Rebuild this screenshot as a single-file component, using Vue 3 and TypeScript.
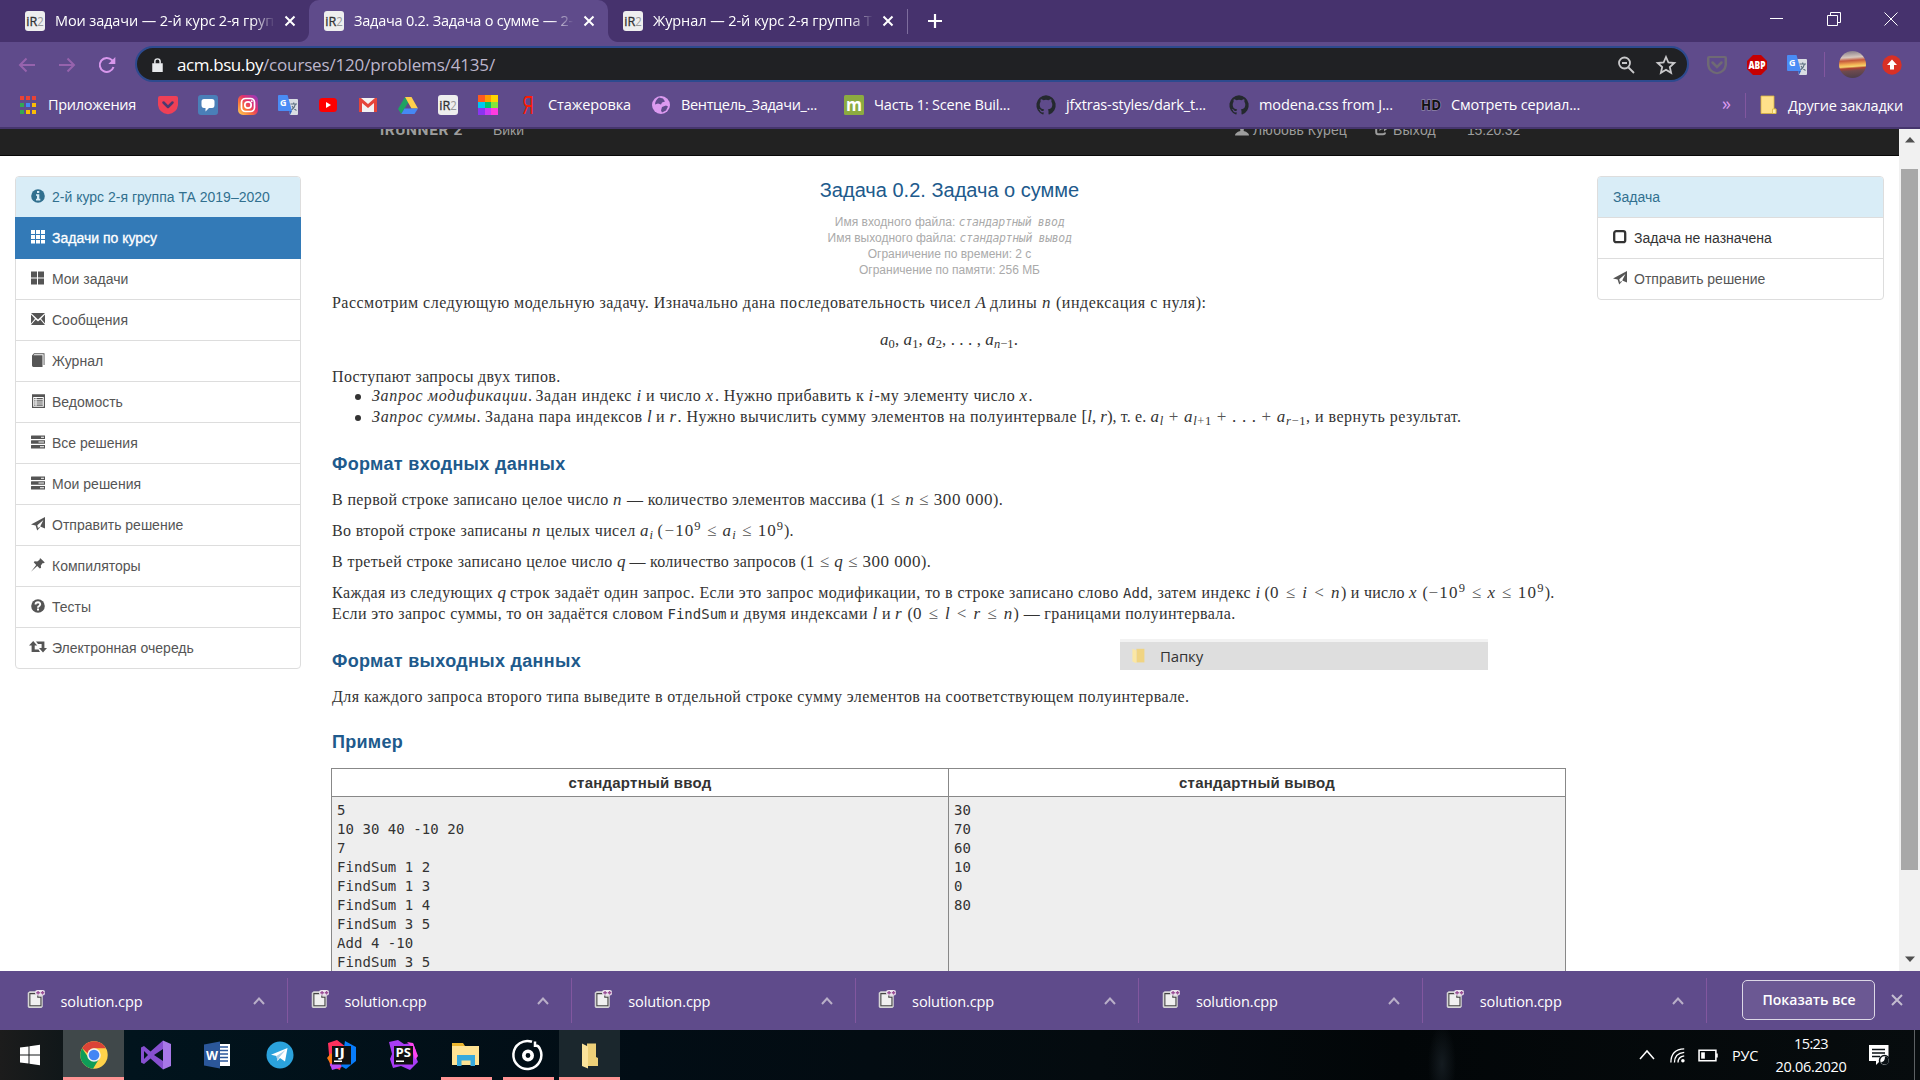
<script setup lang="ts">
type Token = { k: 't' | 'm' | 'c' | 'e'; s: string; w: number }
type Line = { gap: number; kind?: 'center' | 'bullet' | 'head'; tokens: Token[] }
type Part = { s: string; c: string }

// Spreads the letters of a run so that it occupies the given width.
const vFit = {
  mounted(el: HTMLElement, binding: { value: number }) {
    const n = (el.textContent || '').length
    if (!n || !binding.value) return
    const natural = el.getBoundingClientRect().width
    el.style.letterSpacing = ((binding.value - natural) / n).toFixed(4) + 'px'
  },
}

// Builds a row of tokens from start offsets: the last number closes the row.
function row(gap: number, items: (string | number)[], kind?: Line['kind']): Line {
  const tokens: Token[] = []
  for (let i = 0; i + 2 < items.length; i += 2) {
    const raw = items[i + 1] as string
    tokens.push({
      k: raw[0] as Token['k'],
      s: raw.slice(2),
      w: (items[i + 2] as number) - (items[i] as number),
    })
  }
  return { gap, kind, tokens }
}

// Splits a formula: _{..} is a subscript, ^{..} a superscript, Latin letters are italic.
function math(src: string): Part[] {
  const out: Part[] = []
  const letters = (s: string, base: string) => {
    for (const m of s.match(/[A-Za-z]+|[≤<+−]+|[^A-Za-z≤<+−]+/g) || []) {
      const extra = /[A-Za-z]/.test(m) ? ' it' : /[≤<+−]/.test(m) ? ' op' : ''
      out.push({ s: m, c: base + extra })
    }
  }
  for (const piece of src.match(/[_^]\{[^}]*\}|[^_^]+/g) || []) {
    if (piece[0] === '_') letters(piece.slice(2, -1), 'sub')
    else if (piece[0] === '^') letters(piece.slice(2, -1), 'sup')
    else letters(piece, '')
  }
  return out
}

const lines: Line[] = [
  row(15, [331.5, 't:Рассмотрим следующую модельную задачу. Изначально дана последовательность чисел ', 975, 'm:A', 989.5, 't:длины ', 1041.5, 'm:n', 1055.5, 't:(индексация с нуля):', 1206]),
  row(18, [880, 'm:a_{0}, a_{1}, a_{2}, . . . , a_{n−1}.', 1018], 'center'),
  row(16, [331.5, 't:Поступают запросы двух типов.', 560]),
  row(-1, [371.5, 'e:Запрос модификации', 527.5, 't:. ', 535, 't:Задан индекс ', 636, 'm:i', 645.5, 't:и число ', 705, 'm:x', 714.5, 't:. Нужно прибавить к ', 868, 'm:i', 874, 't:-му элементу число ', 1019, 'm:x', 1028, 't:.', 1032], 'bullet'),
  row(1, [371.5, 'e:Запрос суммы', 476, 't:. ', 484.5, 't:Задана пара индексов ', 646.5, 'm:l', 655.5, 't:и ', 669, 'm:r', 677, 't:. Нужно вычислить сумму элементов на полуинтервале ', 1081, 'm:[l, r)', 1112, 't:, т. е. ', 1150, 'm:a_{l} + a_{l+1} + . . . + a_{r−1}', 1305.5, 't:, и вернуть результат.', 1461], 'bullet'),
  row(27, [331.5, 't:Формат входных данных', 565], 'head'),
  row(16, [331.5, 't:В первой строке записано целое число ', 612.5, 'm:n', 626.5, 't:— количество элементов массива (', 876, 'm:1 ≤ n ≤ 300 000', 992.5, 't:).', 1002.5]),
  row(11, [331.5, 't:Во второй строке записаны ', 531.5, 'm:n', 545.5, 't:целых чисел ', 639.5, 'm:a_{i}', 653.5, 't: ', 657, 't:(', 664, 'm:−10^{9} ≤ a_{i} ≤ 10^{9}', 783.5, 't:).', 793]),
  row(11, [331.5, 't:В третьей строке записано целое число ', 616.5, 'm:q', 629, 't:— количество запросов (', 805.5, 'm:1 ≤ q ≤ 300 000', 920.5, 't:).', 930.5]),
  row(11, [331.5, 't:Каждая из следующих ', 497, 'm:q', 509.5, 't:строк задаёт один запрос. Если это запрос модификации, то в строке записано слово ', 1122.5, 'c:Add', 1148, 't:, затем индекс ', 1255, 'm:i', 1264, 't:(', 1269.5, 'm:0 ≤ i < n', 1340.5, 't:) и число ', 1408.5, 'm:x', 1422, 't:(', 1428, 'm:−10^{9} ≤ x ≤ 10^{9}', 1544, 't:).', 1554]),
  row(1, [331.5, 't:Если это запрос суммы, то он задаётся словом ', 667, 'c:FindSum', 726, 't: ', 729.5, 't:и двумя индексами ', 872, 'm:l', 881.5, 't:и ', 894.5, 'm:r', 907, 't:(', 912.5, 'm:0 ≤ l < r ≤ n', 1013, 't:) — границами полуинтервала.', 1235]),
  row(27, [331.5, 't:Формат выходных данных', 580.5], 'head'),
  row(16, [331.5, 't:Для каждого запроса второго типа выведите в отдельной строке сумму элементов на соответствующем полуинтервале.', 1189]),
  row(25, [331.5, 't:Пример', 402.5], 'head'),
]

const meta = [
  { a: 'Имя входного файла: ', aw: 124, b: 'стандартный ввод', bw: 105.5 },
  { a: 'Имя выходного файла: ', aw: 132, b: 'стандартный вывод', bw: 112 },
  { a: 'Ограничение по времени: 2 с', aw: 163.5, b: '', bw: 0 },
  { a: 'Ограничение по памяти: 256 МБ', aw: 181, b: '', bw: 0 },
]

const input = '5\n10 30 40 -10 20\n7\nFindSum 1 2\nFindSum 1 3\nFindSum 1 4\nFindSum 3 5\nAdd 4 -10\nFindSum 3 5\n'
const output = '30\n70\n60\n10\n0\n80'

const tabs = [
  { title: 'Мои задачи — 2-й курс 2-я груп', w: 219, cls: 'first' },
  { title: 'Задача 0.2. Задача о сумме — 2-', w: 219, cls: 'active' },
  { title: 'Журнал — 2-й курс 2-я группа Т', w: 219, cls: '' },
]

const bookmarks = [
  { icon: 'apps', t: 'Приложения', tw: 88, w: 140 },
  { icon: 'pocket', t: '', tw: 0, w: 40 },
  { icon: 'chat', t: '', tw: 0, w: 40 },
  { icon: 'insta', t: '', tw: 0, w: 40 },
  { icon: 'translate', t: '', tw: 0, w: 40 },
  { icon: 'youtube', t: '', tw: 0, w: 40 },
  { icon: 'gmail', t: '', tw: 0, w: 40 },
  { icon: 'drive', t: '', tw: 0, w: 40 },
  { icon: 'ir2', t: '', tw: 0, w: 40 },
  { icon: 'rainbow', t: '', tw: 0, w: 40 },
  { icon: 'ya', t: 'Стажеровка', tw: 83, w: 133 },
  { icon: 'globe', t: 'Вентцель_Задачи_...', tw: 136, w: 193 },
  { icon: 'm', t: 'Часть 1: Scene Buil...', tw: 136, w: 192 },
  { icon: 'github', t: 'jfxtras-styles/dark_t...', tw: 140, w: 193 },
  { icon: 'github', t: 'modena.css from J...', tw: 134, w: 192 },
  { icon: 'hd', t: 'Смотреть сериал...', tw: 129, w: 301 },
]

const menu = [
  { icon: 'info', t: '2-й курс 2-я группа ТА 2019–2020', cls: 'info' },
  { icon: 'th', t: 'Задачи по курсу', cls: 'active' },
  { icon: 'thlarge', t: 'Мои задачи', cls: '' },
  { icon: 'envelope', t: 'Сообщения', cls: '' },
  { icon: 'book', t: 'Журнал', cls: '' },
  { icon: 'listalt', t: 'Ведомость', cls: '' },
  { icon: 'tasks', t: 'Все решения', cls: '' },
  { icon: 'tasks', t: 'Мои решения', cls: '' },
  { icon: 'send', t: 'Отправить решение', cls: '' },
  { icon: 'pin', t: 'Компиляторы', cls: '' },
  { icon: 'question', t: 'Тесты', cls: '' },
  { icon: 'retweet', t: 'Электронная очередь', cls: '' },
]

const taskbar = [
  { icon: 'windows', cls: 'start' },
  { icon: 'chrome', cls: 'open current' },
  { icon: 'vs', cls: '' },
  { icon: 'word', cls: '' },
  { icon: 'telegram', cls: '' },
  { icon: 'idea', cls: '' },
  { icon: 'phpstorm', cls: '' },
  { icon: 'explorer', cls: 'open' },
  { icon: 'groove', cls: 'open' },
  { icon: 'folder', cls: 'open lit' },
]

const cyr = 'font-family="Open Sans, sans-serif"'
// Small 14-unit glyphs of the side menus.
const glyphs: Record<string, string> = {
  info: '<circle cx="7" cy="7" r="6.8"/><path fill="#d9edf7" d="M6 2h2.3v2H6zM5 5.2h3.3v4.6h1v1.6H5V9.8h1V6.8H5z"/>',
  th: '<path d="M0 0h4v4H0zM5 0h4v4H5zM10 0h4v4h-4zM0 5h4v4H0zM5 5h4v4H5zM10 5h4v4h-4zM0 10h4v3.4H0zM5 10h4v3.4H5zM10 10h4v3.4h-4z"/>',
  thlarge: '<path d="M0 .5h6v6H0zM7 .5h6v6H7zM0 7.5h6v6H0zM7 7.5h6v6H7z"/>',
  envelope: '<path d="M0 1h14L7 7.500zM0 2.500l4 4.200-4 4.800zM14 2.500l-4 4.200 4 4.800zM4.700 7.500L7 9.600l2.300-2.100L14 13H0z"/>',
  book: '<path d="M1 2.500L3 .3h10.500V12h-.9V1.300H3.300L2.300 2.300H11.500V14H2.400Q1 14 1 12.600z"/>',
  listalt: '<path fill-rule="evenodd" d="M1 .3h13V14H1zM2.200 3v9.800h10.600V3z"/><path d="M3.200 4h1.300v1.200H3.200zM5.500 4h6.300v1.200H5.500zM3.200 6.200h1.300v1.200H3.200zM5.500 6.200h6.300v1.200H5.500zM3.200 8.400h1.300v1.200H3.200zM5.500 8.400h6.300v1.200H5.500zM3.200 10.600h1.300v1.200H3.200zM5.500 10.600h6.300v1.200H5.500z"/>',
  tasks: '<path fill-rule="evenodd" d="M.5.5H14v3.600H.5Q0 4.100 0 3.600V1Q0 .5.500.5zM10 1.700v1h3v-1zM.5 5.200H14v3.600H.5Q0 8.800 0 8.300V5.700Q0 5.200.500 5.200zM7.500 6.400v1H13v-1zM.5 9.900H14v3.600H.5Q0 13.500 0 13v-2.600Q0 9.900.500 9.900zM9 11.200v1h4v-1z"/>',
  send: '<path d="M14 0v11.600l-4.800-2.200L12.400 3 6.300 8.200 7 11.500 8 10l1 .6L6.200 13.500 4.600 8.500 0 7.500z"/>',
  pin: '<path d="M9.400.3l4.400 4.200-1.300.8-.7-.2-2 2.300.3 2.400-1.300.8-2.600-2.700L0 13.800l5.200-6.900L2.700 4.300l1-1 2.500.3 2.500-1.900-.2-.6z"/>',
  question: '<circle cx="7" cy="7" r="6.800"/><path fill="none" stroke="#fff" stroke-width="1.900" d="M4.500 5.500Q4.600 3.300 7 3.300 9.300 3.400 9.200 5.300 9 6.600 7.700 7.300 7 7.600 7 8.700"/><path fill="#fff" d="M6 9.600h2v2H6z"/>',
  retweet: '<path d="M2.200 1L-2 5.500h2.600V12H9L7.500 9.500H3.700v-4h2.500zM5 1.500L7 4h3.600v4H8l4 4.500L16 8h-2.600V1.500z"/>',
  square: '<rect x="1.200" y="1.200" width="11" height="11" rx="2" fill="none" stroke="currentColor" stroke-width="2.300"/>',
  user: '<path d="M7 0Q10 0 10 3.500 9.800 6.500 8.700 7.500V9Q14 10.500 14 13.500H0Q0 10.500 5.300 9V7.500Q4 6 4 3.500 4 0 7 0z"/>',
  logout: '<path d="M6 2H3Q1.200 2 1.200 4v6Q1.200 12.300 3 12.300h5Q10 12.300 10 10.500" fill="none" stroke="currentColor" stroke-width="2"/><path d="M9 1l5.500 4.200L9 9.500V7Q5.500 7 4.500 9 4.300 4 9 3.500z"/>',
}

// Coloured icons on a 20-unit canvas.
const pics: Record<string, string> = {
  apps: '<path fill="#ea4335" d="M2 1h4v4H2zM8 1h4v4H8zM14 1h4v4h-4z"/><path fill="#34a853" d="M2 8h4v4H2z"/><path fill="#4285f4" d="M8 8h4v4H8z"/><path fill="#fbbc05" d="M14 8h4v4h-4z"/><path fill="#34a853" d="M2 15h4v4H2z"/><path fill="#fbbc05" d="M8 15h4v4H8zM14 15h4v4h-4z"/>',
  pocket: '<path fill="#ef4056" d="M2 1h16q2 0 2 2v7Q19 18 10 19.300 1 18 0 10V3q0-2 2-2z"/><path fill="none" stroke="#4c3a70" stroke-width="2.500" stroke-linecap="round" stroke-linejoin="round" d="M5.500 7.500L10 12l4.500-4.500"/>',
  pocketg: '<path fill="#6f6a74" d="M2 1h16q2 0 2 2v7Q19 18 10 19.300 1 18 0 10V3q0-2 2-2z"/><path fill="#5f4b8b" d="M2.500 3h15v7q-1 6-7.500 7.200Q3.500 16 2.500 10z"/><path fill="none" stroke="#6f6a74" stroke-width="2.500" stroke-linecap="round" d="M5.500 7.500L10 12l4.500-4.500"/>',
  chat: '<rect width="20" height="20" rx="3" fill="#4a7fb8"/><path fill="#fff" d="M6 4h8q2.500 0 2.500 2.500v3.500q0 3-2.500 3h-3l-3.500 3.500V13H6q-2.500 0-2.500-3V6.500Q3.500 4 6 4z"/>',
  insta: '<defs><linearGradient id="ig" x1="0" y1="1" x2="1" y2="0"><stop offset="0" stop-color="#ffd85a"/><stop offset=".35" stop-color="#f9713a"/><stop offset=".6" stop-color="#e0306f"/><stop offset="1" stop-color="#8a3bc8"/></linearGradient></defs><rect width="20" height="20" rx="5" fill="url(#ig)"/><rect x="3.500" y="3.500" width="13" height="13" rx="4" fill="none" stroke="#fff" stroke-width="1.700"/><circle cx="10" cy="10" r="3.200" fill="none" stroke="#fff" stroke-width="1.700"/><circle cx="13.800" cy="6.200" r=".9" fill="#fff"/>',
  translate: `<path fill="#d9dde3" d="M8 4h11q1 0 1 1v14q0 1-1 1h-7z"/><path fill="#4a8cf5" d="M1 0h8.500l4.500 16H1q-1 0-1-1V1q0-1 1-1z"/><path fill="#3060c0" d="M11 16h3l-2 4z"/><text x="2" y="11" font-size="9" font-weight="700" fill="#fff" ${cyr}>G</text><path fill="none" stroke="#5c6f80" stroke-width="1.100" d="M12.500 9h6.500M15.700 7.500V9M17.500 9q-1 4-4 6M14 11q2 3.500 4.500 4.500"/>`,
  youtube: '<rect x="1" y="3" width="18" height="14" rx="3.500" fill="#f00"/><path fill="#fff" d="M8 7l5 3-5 3z"/>',
  gmail: '<path fill="#f2f2f2" d="M1 3h18v14H1z"/><path fill="#e5453a" d="M1 3h2l7 6 7-6h2v14h-3V8l-6 5-6-5v9H1z"/>',
  drive: '<path fill="#1ea362" d="M7 2L0 14l3.300 5L10.500 7z"/><path fill="#ffd04b" d="M7 2h6.500l6.500 11.500h-6.500z"/><path fill="#4688f4" d="M6.500 13.500H20L16.500 19H3.300z"/>',
  ir2: `<rect width="20" height="20" rx="3" fill="#eee"/><text x="1.200" y="15" font-size="13" fill="#333" stroke="#333" stroke-width=".3" textLength="11" lengthAdjust="spacingAndGlyphs" ${cyr}>iR</text><text x="12.200" y="15" font-size="13" fill="#999" textLength="6.500" lengthAdjust="spacingAndGlyphs" ${cyr}>2</text>`,
  rainbow: '<path fill="#ff5a1f" d="M0 0h7v7H0z"/><path fill="#ff9c00" d="M7 0h6v7H7z"/><path fill="#ffd500" d="M13 0h7v7h-7z"/><path fill="#00c8f0" d="M0 7h7v6H0z"/><path fill="#00c46c" d="M7 7h6v6H7z"/><path fill="#84e63c" d="M13 7h7v6h-7z"/><path fill="#8a35f0" d="M0 13h7v7H0z"/><path fill="#c93cf5" d="M7 13h6v7H7z"/><path fill="#ff3ce0" d="M13 13h7v7h-7z"/>',
  ya: '<text x="4.500" y="18.500" font-size="25" fill="#ff1a00" textLength="11" lengthAdjust="spacingAndGlyphs" font-family="Liberation Sans, sans-serif">Я</text>',
  globe: '<circle cx="10" cy="10" r="9" fill="#dc9af0"/><path fill="#5f4b8b" d="M8 2.500l4 1 2 3-3 1-1 2-3-1-3 1q0-4 4-7zM11 12l4-1.500 2 1-2 4-4 2-1-2z"/>',
  m: `<rect width="20" height="20" rx="1.500" fill="#8cab40"/><text x="2" y="15.500" font-size="18" font-weight="700" fill="#fff" textLength="16" lengthAdjust="spacingAndGlyphs" ${cyr}>m</text>`,
  github: '<path fill="#24292e" d="M10 .3a9.900 9.900 0 0 0-3.100 19.200c.5.100.7-.2.700-.5v-1.700c-2.800.6-3.400-1.300-3.400-1.300-.4-1.200-1.100-1.500-1.100-1.500-.9-.6.1-.6.100-.6 1 .1 1.500 1 1.500 1 .9 1.500 2.300 1.100 2.900.8.1-.6.4-1.100.6-1.300-2.200-.3-4.500-1.100-4.500-4.900 0-1.100.4-2 1-2.700-.1-.2-.4-1.200.1-2.600 0 0 .8-.3 2.700 1a9.400 9.400 0 0 1 5 0c1.900-1.300 2.700-1 2.700-1 .5 1.400.2 2.400.1 2.600.6.7 1 1.600 1 2.700 0 3.800-2.300 4.600-4.500 4.900.4.300.7.900.7 1.800V19c0 .3.200.6.700.5A9.900 9.900 0 0 0 10 .3z"/>',
  hd: `<text x="0" y="15" font-size="14.500" font-weight="700" fill="#111" stroke="#8d83a5" stroke-width="1.500" paint-order="stroke" textLength="20" lengthAdjust="spacingAndGlyphs" ${cyr}>HD</text>`,
  abp: `<path fill="#c70000" d="M6 0h8l6 6v8l-6 6H6l-6-6V6z"/><text x="1.500" y="14" font-size="10.500" font-weight="800" fill="#fff" textLength="17" lengthAdjust="spacingAndGlyphs" ${cyr}>ABP</text>`,
  update: '<circle cx="10" cy="10" r="9.700" fill="#d93025"/><path fill="#fff" d="M10 4.500l5 5.500h-3v4.500H8V10H5z"/>',
  bmfolder: '<path fill="#ffe08a" stroke="#d9b53c" stroke-width=".8" d="M3 1h13v13l2 0v4.500H3z"/><path fill="#fff0ae" stroke="#d9b53c" stroke-width=".8" d="M14.500 14H18v4.500h-3.500z"/>',
  file: '<path fill="#d5d5d5" d="M3 1.500h13v3l1.500 1V18.500l-1.500 1.500H2L.8 18.500V3z"/><path fill="#f0f0f0" stroke="#444" stroke-width="1.200" d="M4 4h8v4h3.500v9.500H3.200V4z"/><rect x="9" y="0" width="11" height="6" rx="2.500" fill="#ece4ee"/><path stroke="#9a4f96" stroke-width="1.500" d="M10.300 3h4M12.300 1v4M15.300 3h4M17.300 1v4"/>',
  smallfolder: '<path fill="#f0d482" d="M8 1h10v17H8z"/><path fill="#fbe7a4" d="M3 1l5 2v16l-5-2z"/>',
}

// Taskbar icons on a 30-unit canvas.
const apps: Record<string, string> = {
  windows: '<path fill="#fff" d="M5 7.600L13.500 6.400V14.500H5zM14.500 6.200L25 4.800v9.700H14.500zM5 15.500h8.500v8.100L5 22.400zM14.500 15.500H25v9.700l-10.500-1.400z"/>',
  chrome: '<circle cx="15" cy="15" r="13.700" fill="#ffd24a"/><path fill="#db4437" d="M3.100 8.200A13.700 13.700 0 0 1 26.900 8.200H15q-5 .4-6 5.200z"/><path fill="#0f9d58" d="M3.100 8.200A13.700 13.700 0 0 0 14 28.700l6-9.800q-7 5-11-2z"/><circle cx="15" cy="15" r="6.800" fill="#f1f1f1"/><circle cx="15" cy="15" r="5.300" fill="#4285f4"/>',
  vs: '<path fill="#a878e8" d="M22 .5l8 3.500v22l-8 3.500z"/><path fill="#8750d0" fill-rule="evenodd" d="M22 .5V9L13 15l9 6v8.500L9.500 18.500 3 24l-3-1.500V7.500L3 6l6.500 5.500zM3 11v8l4-4z"/>',
  word: `<path fill="#fff" d="M15 4h12v22H15z"/><path stroke="#2b579a" stroke-width="1.500" d="M16 7h9M16 10.500h9M16 14h9M16 17.500h9M16 21h9"/><path fill="#2b579a" d="M1 4.500L17 1.500v27L1 25.500z"/><text x="3" y="20" font-size="13" font-weight="700" fill="#fff" textLength="12" lengthAdjust="spacingAndGlyphs" ${cyr}>W</text>`,
  telegram: '<circle cx="15" cy="15" r="13.500" fill="#2ba2dc"/><path fill="#fff" d="M6 14.700L22.500 8 20 21.500l-5-3.500-2.500 3-1-5z"/><path fill="#a9cfe8" d="M11.500 16l9-6-6 7-2 4z"/>',
  idea: `<path fill="#fe315d" d="M1 3l9-3 9 7-6 23-10-4z"/><path fill="#f97a12" d="M0 18l4-5 7 9-5 6z"/><path fill="#087cfa" d="M18 1l11 6v14l-10 8-5-3z"/><path fill="#b74af7" d="M3 24l8-2 4 5-10 3z"/><path fill="#111" d="M5 6h19v18.500H5z"/><text x="7" y="16.500" font-size="12" font-weight="700" fill="#fff" textLength="11" lengthAdjust="spacingAndGlyphs" ${cyr}>IJ</text><path fill="#fff" d="M7 20.500h8V22H7z"/>`,
  phpstorm: `<path fill="#a93cf5" d="M0 2l9-2 6 4 9-1 3 8-1 4 3 7-8 8-9-4-8 2-3-9 2-5z"/><path fill="#ff45ed" d="M18 2l6 1 5 13-3 4-4-14z"/><path fill="#111" d="M5 6h19v18.500H5z"/><text x="6.500" y="16.500" font-size="12" font-weight="700" fill="#fff" textLength="15.500" lengthAdjust="spacingAndGlyphs" ${cyr}>PS</text><path fill="#fff" d="M7 20.500h8V22H7z"/>`,
  explorer: '<path fill="#ecb72f" d="M1 3h11l2 3H1z"/><path fill="#ffe394" d="M1 6h27v19H1z"/><path fill="#37a9dc" d="M6 15h18v11h-4.500v-5.500h-9V26H6z"/>',
  groove: '<path fill="none" stroke="#fff" stroke-width="2.500" d="M19 1.800A14 14 0 1 0 27 9q-1.500-4-5-3.500M22 1.500v5.500"/><circle cx="15" cy="15.500" r="4.200" fill="none" stroke="#fff" stroke-width="3.600"/>',
  folder: '<path fill="#edcf78" d="M12 3.500h9V17l2 1v8H12z"/><path fill="#fbe39b" d="M7 3.500l6 3v22l-6-2.500z"/>',
}
</script>

<template>
  <div class="screen">
    <header class="tabstrip">
      <div v-for="t in tabs" :key="t.title" class="tab" :class="t.cls">
        <svg class="p20" viewBox="0 0 20 20" v-html="pics.ir2" />
        <span class="tabtitle"><span v-fit="t.w" class="run">{{ t.title }}</span></span>
        <svg class="x" viewBox="0 0 12 12"><path d="M1.500 1.500l9 9M10.500 1.500l-9 9" /></svg>
      </div>
      <i class="tabsep" />
      <svg class="plus" viewBox="0 0 16 16"><path d="M8 1v14M1 8h14" /></svg>
      <div class="wincontrols">
        <svg viewBox="0 0 14 14"><path d="M0 6.500h13" /></svg>
        <svg viewBox="0 0 14 14"><path d="M.5 3.500h10v10H.5zM3.500 3.500v-3h10v10h-3" /></svg>
        <svg viewBox="0 0 14 14"><path d="M.5 .5l13 13M13.500 .5l-13 13" /></svg>
      </div>
    </header>

    <div class="toolbar">
      <svg class="nav" viewBox="0 0 18 18"><path d="M17 9H2M8.500 2.500L2 9l6.500 6.500" /></svg>
      <svg class="nav" viewBox="0 0 18 18"><path d="M1 9h15M9.500 2.500L16 9l-6.500 6.500" /></svg>
      <svg class="nav reload" viewBox="0 0 18 18"><path d="M15.500 11A7 7 0 1 1 14 4.200L16 6.500" /><path class="solid" d="M17.300 1v7h-7z" /></svg>
      <div class="omnibox">
        <svg class="lock" viewBox="0 0 12 16"><path fill="#e8eaed" d="M0 6h12v10H0z" /><path fill="none" stroke="#e8eaed" stroke-width="1.700" d="M3 6.500V4q0-3 3-3t3 3v2.500" /></svg>
        <span v-fit="86" class="run dom">acm.bsu.by</span><span v-fit="232" class="run path">/courses/120/problems/4135/</span>
        <svg class="obicon zoomer" viewBox="0 0 20 20"><circle cx="8.500" cy="8" r="5.500" /><path d="M12.500 12.500L18 18M6 8h5" /></svg>
        <svg class="obicon" viewBox="0 0 20 20"><path d="M10 2l2.400 5.500 5.900.5-4.500 4 1.300 5.800L10 14.700l-5.100 3.100L6.200 12 1.700 8l5.900-.5z" /></svg>
      </div>
      <svg class="p20 e1" viewBox="0 0 20 20" v-html="pics.pocketg" />
      <svg class="p20 e2" viewBox="0 0 20 20" v-html="pics.abp" />
      <svg class="p20 e2" viewBox="0 0 20 20" v-html="pics.translate" />
      <i class="tbsep" />
      <i class="avatar" />
      <svg class="p20 upd" viewBox="0 0 20 20" v-html="pics.update" />
    </div>

    <div class="bookmarks">
      <div v-for="(b, i) in bookmarks" :key="i" class="bm" :style="{ width: b.w + 'px' }">
        <svg class="p20" viewBox="0 0 20 20" v-html="pics[b.icon]" />
        <span v-if="b.t" v-fit="b.tw" class="run">{{ b.t }}</span>
      </div>
      <span class="more">»</span>
      <i class="tbsep" />
      <svg class="p20 bf" viewBox="0 0 20 20" v-html="pics.bmfolder" />
      <span v-fit="115" class="run">Другие закладки</span>
    </div>

    <div class="viewport">
      <div class="page">
        <nav class="navbar">
          <span class="brand"><span v-fit="83" class="run">iRUNNER 2</span></span>
          <span class="wiki"><span v-fit="31" class="run">Вики</span></span>
          <span class="usr"><svg class="g" viewBox="0 0 14 14" v-html="glyphs.user" /><span v-fit="94" class="run">Любовь Курец</span></span>
          <span class="out"><svg class="g" viewBox="0 0 14 14" v-html="glyphs.logout" /><span v-fit="43" class="run">Выход</span></span>
          <span class="clock"><span v-fit="53" class="run">15:20:32</span></span>
        </nav>

        <div class="cols">
          <ul class="group left">
            <li v-for="m in menu" :key="m.t" :class="m.cls">
              <svg class="g" viewBox="0 0 14 14" v-html="glyphs[m.icon]" />{{ m.t }}
            </li>
          </ul>

          <main>
            <h1><span v-fit="259.500" class="run">Задача 0.2. Задача о сумме</span></h1>
            <div class="meta">
              <div v-for="r in meta" :key="r.a">
                <span v-fit="r.aw" class="run">{{ r.a }}</span><span v-if="r.b" v-fit="r.bw" class="run mono">{{ r.b }}</span>
              </div>
            </div>

            <div v-for="(l, i) in lines" :key="i" class="line" :class="l.kind" :style="{ marginTop: l.gap + 'px' }">
              <template v-for="(t, j) in l.tokens" :key="j">
                <span v-if="t.k === 'm' && t.s.length === 1" class="run m it" :style="{ width: t.w + 'px' }">{{ t.s }}</span>
                <span v-else-if="t.k === 'm'" v-fit="t.w" class="run m"><span v-for="(p, n) in math(t.s)" :key="n" :class="p.c">{{ p.s }}</span></span>
                <span v-else v-fit="t.w" class="run" :class="t.k">{{ t.s }}</span>
              </template>
            </div>

            <div class="sample">
              <div class="th"><span v-fit="143" class="run">стандартный ввод</span></div>
              <div class="th"><span v-fit="156" class="run">стандартный вывод</span></div>
              <pre>{{ input }}</pre>
              <pre>{{ output }}</pre>
            </div>
          </main>

          <ul class="group right">
            <li class="info">Задача</li>
            <li class="dark"><svg class="g" viewBox="0 0 14 14" v-html="glyphs.square" />Задача не назначена</li>
            <li><svg class="g" viewBox="0 0 14 14" v-html="glyphs.send" />Отправить решение</li>
          </ul>
        </div>
      </div>
      <div class="scrollbar">
        <svg viewBox="0 0 10 6"><path d="M5 0l5 5.500H0z" /></svg>
        <i class="thumb" />
        <svg viewBox="0 0 10 6"><path d="M0 .5h10L5 6z" /></svg>
      </div>
    </div>

    <div class="popup">
      <svg class="p20" viewBox="0 0 20 20" v-html="pics.smallfolder" />
      <span v-fit="43" class="run">Папку</span>
    </div>

    <div class="downloads">
      <div v-for="n in 6" :key="n" class="dl">
        <svg class="p20" viewBox="0 0 20 20" v-html="pics.file" />
        <span v-fit="82" class="run">solution.cpp</span>
        <svg class="chev" viewBox="0 0 12 8"><path d="M1 7l5-5.500L11 7" /></svg>
      </div>
      <button><span v-fit="93" class="run">Показать все</span></button>
      <svg class="dx" viewBox="0 0 12 12"><path d="M1 1l10 10M11 1L1 11" /></svg>
    </div>

    <footer class="taskbar">
      <div v-for="a in taskbar" :key="a.icon" class="task" :class="a.cls">
        <svg viewBox="0 0 30 30" v-html="apps[a.icon]" />
      </div>
      <div class="tray">
        <svg class="t1" viewBox="0 0 16 10"><path d="M1 9l7-8 7 8" /></svg>
        <svg class="t2" viewBox="0 0 18 18"><path d="M1 17Q1 2 16 1.500M5 17Q5 6.500 16 5.500M9 17Q9 10.500 16 9.500" /><circle cx="14.500" cy="15" r="2" fill="#fff" stroke="none" /></svg>
        <svg class="t3" viewBox="0 0 19 12"><path d="M1 1h16v10H1zM18 4v4" /><path d="M3 3h3.500v6H3z" fill="#fff" stroke="none" /></svg>
        <span class="lang"><span v-fit="26" class="run">РУС</span></span>
        <div class="dt"><span v-fit="34" class="run">15:23</span><span v-fit="71" class="run">20.06.2020</span></div>
        <svg class="t4" viewBox="0 0 22 22"><path fill="#fff" stroke="none" d="M1 1h19.500v16H12l-4 4v-4H1z" /><path stroke="#0a1115" d="M4 5.500h13M4 9h13M4 12.500h8" /><circle cx="16.500" cy="16.500" r="5" fill="#fff" stroke="#0a1115" /><path fill="#0a1115" stroke="none" d="M17 12.500a4 4 0 1 1-4 5.500q4 0 4-5.500z" /></svg>
        <i class="peek" />
      </div>
    </footer>
  </div>
</template>

<style>
body {
  margin: 0;
  background: #fff;
}
</style>

<style scoped>
.screen {
  position: relative;
  width: 1920px;
  height: 1080px;
  overflow: hidden;
  display: flex;
  flex-direction: column;
  font-family: 'Open Sans', 'Noto Sans', sans-serif;
  font-size: 14.5px;
  color: #fff;
}
svg {
  display: block;
  flex: none;
  overflow: visible;
}
i {
  display: block;
  flex: none;
}
.run {
  display: inline-block;
  white-space: pre;
  flex: none;
}
.p20 {
  width: 20px;
  height: 20px;
}

/* tabs */
.tabstrip {
  height: 42px;
  flex: none;
  background: #46326d;
  display: flex;
  align-items: center;
}
.tab {
  width: 299px;
  height: 42px;
  flex: none;
  display: flex;
  align-items: center;
  box-sizing: border-box;
  padding-left: 15px;
  position: relative;
}
.tab.first {
  width: 309px;
  padding-left: 25px;
}
.tab.active {
  background: #5f4b8b;
  border-radius: 10px 10px 0 0;
}
.tab.active::before,
.tab.active::after {
  content: '';
  position: absolute;
  bottom: 0;
  width: 10px;
  height: 10px;
}
.tab.active::before {
  left: -10px;
  background: radial-gradient(circle at 0 0, #46326d 9.5px, #5f4b8b 10.5px);
}
.tab.active::after {
  right: -10px;
  background: radial-gradient(circle at 100% 0, #46326d 9.5px, #5f4b8b 10.5px);
}
.tabtitle {
  margin-left: 10px;
  width: 220px;
  flex: none;
  line-height: 24px;
  -webkit-mask-image: linear-gradient(90deg, #000 90%, transparent);
  mask-image: linear-gradient(90deg, #000 90%, transparent);
}
.x {
  width: 12px;
  height: 12px;
  margin-left: 9px;
  fill: none;
  stroke: #fff;
  stroke-width: 2;
}
.tabsep {
  width: 1px;
  height: 25px;
  background: #7e6d9e;
}
.plus {
  width: 16px;
  height: 16px;
  margin-left: 19px;
  stroke: #fff;
  stroke-width: 2.2;
}
.wincontrols {
  margin-left: auto;
  margin-right: 22px;
  margin-top: -5px;
  display: flex;
  gap: 43px;
}
.wincontrols svg {
  width: 14px;
  height: 14px;
  fill: none;
  stroke: #fff;
  stroke-width: 1;
}

/* address row */
.toolbar {
  height: 44px;
  flex: none;
  background: #5f4b8b;
  display: flex;
  align-items: center;
}
.nav {
  width: 18px;
  height: 18px;
  fill: none;
  stroke: #9663ad;
  stroke-width: 2;
  margin-left: 22px;
  margin-top: 1px;
}
.nav:first-child {
  margin-left: 18px;
}
.reload {
  stroke: #d897ec;
}
.reload .solid {
  fill: #d897ec;
  stroke: none;
}
.omnibox {
  margin-left: 19px;
  width: 1554px;
  height: 36px;
  box-sizing: border-box;
  border: 2px solid #2d4a8e;
  border-radius: 18px;
  background: #202124;
  display: flex;
  align-items: center;
  font-size: 17px;
  line-height: 28px;
  padding-left: 15px;
  padding-top: 1px;
}
.lock {
  width: 11px;
  height: 14px;
  margin-right: 14px;
}
.path {
  color: #bdb6cc;
}
.obicon {
  width: 20px;
  height: 20px;
  fill: none;
  stroke: #c8c8ca;
  stroke-width: 1.8;
}
.zoomer {
  margin-left: auto;
  margin-right: 20px;
}
.obicon:last-child {
  margin-right: 11px;
}
.e1 {
  margin-left: 18px;
  margin-top: 1px;
}
.e2 {
  margin-left: 20px;
  margin-top: 1px;
}
.e2 + .tbsep {
  margin-top: 1px;
}
.tbsep {
  width: 1px;
  height: 25px;
  background: #82579f;
}
.toolbar .tbsep {
  margin-left: 17px;
}
.avatar {
  width: 27px;
  height: 27px;
  border-radius: 50%;
  margin-left: 14px;
  margin-top: 1px;
  background: linear-gradient(176deg, #7e7585 0, #d7c8bd 25%, #c4583c 36%, #f4b054 50%, #f5d56c 57%, #b0412f 63%, #6e4a4e 72%, #493d4b 100%);
}
.upd {
  margin-left: 16px;
  margin-top: 1px;
}

/* bookmarks */
.bookmarks {
  height: 43px;
  flex: none;
  background: #5f4b8b;
  border-bottom: 2px solid #46356d;
  box-sizing: border-box;
  display: flex;
  align-items: center;
  padding-left: 18px;
  padding-bottom: 3px;
}
.bm {
  flex: none;
  display: flex;
  align-items: center;
  gap: 10px;
  line-height: 24px;
}
.more {
  width: 23px;
  color: #dc9af0;
  font-size: 18px;
  line-height: 20px;
  margin-top: -4px;
}
.bf {
  margin-left: 12px;
  margin-right: 10px;
}

/* page */
.viewport {
  height: 842px;
  flex: none;
  display: flex;
  background: #fff;
}
.page {
  width: 1899px;
  flex: none;
  overflow: hidden;
  font-family: 'Liberation Sans', Arial, sans-serif;
  font-size: 14px;
  color: #333;
}
.navbar {
  height: 27px;
  box-sizing: border-box;
  background: #222;
  border-bottom: 1px solid #080808;
  color: #9d9d9d;
  display: flex;
  overflow: hidden;
  padding-left: 380px;
}
.navbar > span {
  flex: none;
  display: flex;
  height: 20px;
  line-height: 20px;
  margin-top: -9px;
}
.navbar .g {
  margin: 2px 4px 0 0;
}
.brand {
  width: 113px;
  font-family: Roboto, 'Open Sans', sans-serif;
  font-weight: 700;
  font-size: 15.5px;
}
.wiki {
  width: 742px;
}
.usr {
  width: 140px;
}
.out {
  width: 92px;
}
.g {
  width: 14px;
  height: 14px;
  fill: currentColor;
}
.cols {
  display: flex;
  align-items: flex-start;
  height: 815px;
}
.group {
  list-style: none;
  margin: 20px 0 0;
  padding: 0;
  box-sizing: border-box;
  flex: none;
  border: 1px solid #ddd;
  border-radius: 4px;
  color: #555;
}
.left {
  width: 286px;
  margin-left: 15px;
}
.right {
  width: 287px;
  margin-left: 31px;
}
.group li {
  height: 41px;
  box-sizing: border-box;
  border-bottom: 1px solid #ddd;
  padding: 0 0 1px 15px;
  display: flex;
  align-items: center;
  gap: 7px;
}
.group li .g {
  margin-top: -2px;
}
.group li:last-child {
  border-bottom: 0;
  height: 40px;
  padding-bottom: 0;
}
.group li.info {
  background: #d9edf7;
  color: #31708f;
  border-radius: 3px 3px 0 0;
}
.left li.info {
  height: 40px;
  border-bottom: 0;
  padding-bottom: 0;
}
.group li.active {
  background: #337ab7;
  color: #fff;
  height: 42px;
  border-bottom: 0;
  margin: 0 -1px;
  padding: 0 0 0 16px;
  -webkit-text-stroke: 0.3px #fff;
}
.group li.dark {
  color: #333;
}

main {
  width: 1235px;
  margin-left: 30px;
  flex: none;
  height: 815px;
  overflow: hidden;
}
h1 {
  margin: 22px 0 0 2px;
  font-weight: 400;
  font-size: 20px;
  line-height: 24px;
  color: #205a8c;
  text-align: center;
}
.meta {
  margin: 12px 0 0 2px;
  font-size: 12px;
  line-height: 16px;
  color: #aaa;
}
.meta > div {
  display: flex;
  justify-content: center;
  align-items: baseline;
  height: 16px;
}
.mono {
  font-family: 'DejaVu Sans Mono', monospace;
  font-style: italic;
  font-size: 11.5px;
}
.line {
  display: flex;
  align-items: baseline;
  height: 20px;
  line-height: 20px;
  padding-left: 1px;
  font-family: 'Liberation Serif', 'Times New Roman', serif;
  font-size: 16px;
}
.line.center {
  justify-content: center;
}
.line.bullet {
  padding-left: 41px;
  position: relative;
}
.line.bullet::before {
  content: '';
  position: absolute;
  left: 24px;
  top: 8px;
  width: 6px;
  height: 6px;
  border-radius: 50%;
  background: #333;
}
.line.head {
  font-family: 'Liberation Sans', Arial, sans-serif;
  font-weight: 700;
  font-size: 18px;
  color: #205a8c;
}
.e {
  font-style: italic;
}
.c {
  font-family: 'DejaVu Sans Mono', monospace;
  font-size: 14px;
}
.m {
  font-family: 'Liberation Serif', 'Times New Roman', serif;
  font-size: 17px;
  line-height: 17px;
}
.it {
  font-style: italic;
}
.op {
  color: #555;
}
.sub {
  font-size: 12.5px;
  line-height: 0;
  vertical-align: -3px;
}
.sup {
  font-size: 12.5px;
  line-height: 0;
  vertical-align: 6px;
}
.sample {
  margin-top: 16px;
  display: grid;
  grid-template-columns: 617px 617px;
  grid-template-rows: 28px 300px;
  border-left: 1px solid #888;
  border-top: 1px solid #888;
  box-sizing: border-box;
  width: 1235px;
}
.sample > * {
  box-sizing: border-box;
  border-right: 1px solid #888;
  border-bottom: 1px solid #888;
}
.th {
  text-align: center;
  font-weight: 700;
  font-size: 15px;
  line-height: 27px;
}
pre {
  margin: 0;
  background: #eee;
  padding: 4px 5px;
  font-family: 'DejaVu Sans Mono', monospace;
  font-size: 14px;
  letter-spacing: 0.05px;
  line-height: 19px;
}

.scrollbar {
  width: 21px;
  background: #f1f1f1;
  display: flex;
  flex-direction: column;
  align-items: center;
  box-sizing: border-box;
  padding: 8px 0 9px;
}
.scrollbar svg {
  width: 10px;
  height: 6px;
  fill: #505050;
}
.thumb {
  width: 17px;
  height: 701px;
  margin: 26px 0 auto;
  background: #a8a8a8;
}

/* floating menu entry */
.popup {
  position: absolute;
  left: 1120px;
  top: 639px;
  width: 368px;
  height: 31px;
  box-sizing: border-box;
  border-top: 3px solid #f2f2f2;
  background: #dedede;
  color: #333;
  display: flex;
  align-items: center;
  padding-left: 10px;
  font-size: 15px;
}
.popup .p20 {
  width: 16px;
  height: 18px;
  margin-right: 14px;
}

/* downloads */
.downloads {
  height: 59px;
  flex: none;
  background: #5f4b8b;
  display: flex;
  align-items: center;
}
.dl {
  width: 283.8px;
  height: 45px;
  flex: none;
  box-sizing: border-box;
  border-right: 1px solid #82579f;
  display: flex;
  align-items: center;
  padding-left: 22.5px;
}
.dl:first-child {
  width: 288px;
  padding-left: 26.5px;
}
.dl .p20 {
  width: 18px;
  height: 20px;
  margin-top: -3px;
}
.dl .run {
  margin-left: 16px;
  margin-top: 2px;
  line-height: 24px;
}
.chev {
  width: 12px;
  height: 8px;
  margin-left: auto;
  margin-right: 22px;
  fill: none;
  stroke: #b9afc8;
  stroke-width: 2;
}
.downloads button {
  width: 133px;
  height: 40px;
  margin: 0 0 1px 35.5px;
  padding: 0 0 2px;
  box-sizing: border-box;
  border: 1px solid #dcd7e6;
  border-radius: 5px;
  background: #6b5893;
  color: #fff;
  font: 600 14px 'Open Sans', sans-serif;
}
.dx {
  width: 12px;
  height: 12px;
  margin: -1px 0 0 16px;
  fill: none;
  stroke: #c4bcd0;
  stroke-width: 2;
}

/* taskbar */
.taskbar {
  height: 50px;
  flex: none;
  display: flex;
  background: radial-gradient(ellipse 14px 40px at 1442px 34px, #141b20 0, transparent 100%), linear-gradient(90deg, #1c1c1c 0, #101719 64px, #01141d 130px, #020d15 640px, #040b0f 1100px, #020608 1400px, #070c0e 100%);
}
.task {
  width: 62px;
  height: 50px;
  flex: none;
  box-sizing: border-box;
  display: flex;
  justify-content: center;
  align-items: center;
}
.task svg {
  width: 30px;
  height: 30px;
}
.task.start {
  width: 63px;
  padding-right: 4px;
}
.task.open {
  background: linear-gradient(#ff9494, #ff9494) 50% 100% / 51px 3px no-repeat;
}
.task.current,
.task.lit {
  width: 61px;
  background: linear-gradient(#ff9494, #ff9494) 0 100% / 61px 3px no-repeat, #1b272d;
}
.task.current {
  background-color: #40484a;
  margin-right: 1px;
}
.tray {
  margin-left: auto;
  display: flex;
  align-items: center;
  font-size: 14.5px;
}
.tray svg {
  fill: none;
  stroke: #fff;
  stroke-width: 1.5;
}
.t1 {
  width: 16px;
  height: 10px;
  margin-right: 15px;
}
.t2 {
  width: 16px;
  height: 17px;
  margin-right: 12px;
}
.t3 {
  width: 20px;
  height: 13px;
  margin-right: 14px;
}
.lang {
  width: 43px;
}
.dt {
  width: 72px;
  display: flex;
  flex-direction: column;
  align-items: center;
  line-height: 23px;
  margin-right: 21px;
}
.tray .t4 {
  width: 22px;
  height: 22px;
  margin-right: 24px;
}
.peek {
  width: 1px;
  height: 50px;
  background: #5c6163;
  margin-right: 5px;
}
</style>
